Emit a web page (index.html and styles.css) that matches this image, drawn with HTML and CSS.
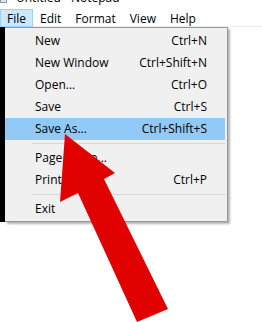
FILE: index.html
```html
<!DOCTYPE html>
<html lang="en">
<head>
    <meta charset="UTF-8">
    <title>Untitled - Notepad</title>
    <link rel="stylesheet" href="styles.css">
</head>
<body>
    <div class="window">
        <header class="titlebar">
            <span class="app-icon"></span>
            <span class="title">Untitled - Notepad</span>
        </header>

        <nav class="menubar">
            <span class="menubar-item active">File</span>
            <span class="menubar-item">Edit</span>
            <span class="menubar-item">Format</span>
            <span class="menubar-item">View</span>
            <span class="menubar-item">Help</span>
        </nav>

        <div class="editor"></div>

        <!-- File menu, open -->
        <div class="dropdown">
            <div class="edge"></div>
            <ul class="menu">
                <li class="menu-row"><span>New</span><span class="key">Ctrl+N</span></li>
                <li class="menu-row"><span>New Window</span><span class="key">Ctrl+Shift+N</span></li>
                <li class="menu-row"><span>Open...</span><span class="key">Ctrl+O</span></li>
                <li class="menu-row"><span>Save</span><span class="key">Ctrl+S</span></li>
                <li class="menu-row selected"><span>Save As...</span><span class="key">Ctrl+Shift+S</span></li>
                <li class="separator"></li>
                <li class="menu-row"><span>Page Setup...</span></li>
                <li class="menu-row"><span>Print...</span><span class="key">Ctrl+P</span></li>
                <li class="separator"></li>
                <li class="menu-row"><span>Exit</span></li>
            </ul>
        </div>

        <!-- annotation arrow -->
        <svg class="arrow" width="262" height="322" viewBox="0 0 262 322">
            <polygon points="65,134 115,173 104,179 168,309 137,322 78,193 60,202" fill="#e00000"/>
        </svg>
    </div>
</body>
</html>
```

FILE: styles.css
```css
* {
    margin: 0;
    padding: 0;
    box-sizing: border-box;
}

body {
    font-family: 'Open Sans', 'Liberation Sans', sans-serif;
    font-size: 12px;
    color: #000;
    background: white;
    overflow: hidden;
}

.window {
    position: relative;
    width: 262px;
    height: 322px;
    display: flex;
    flex-direction: column;
    background: white;
    overflow: hidden;
}

.titlebar {
    height: 9px;
    display: flex;
    align-items: flex-start;
    overflow: hidden;
}

.app-icon {
    width: 7px;
    height: 4px;
    margin-top: -1px;
    border: 1px solid #8a9aa8;
    border-top: none;
    background: #dfe8f0;
}

.title {
    margin-left: 9px;
    margin-top: -8px;
    line-height: 12px;
}

.menubar {
    display: flex;
    height: 18px;
    border-bottom: 1px solid #ededed;
}

.menubar-item {
    padding: 0 6px;
    line-height: 17px;
    border: 1px solid transparent;
    border-bottom: none;
}

.menubar-item.active {
    background: #cce8ff;
    border-color: #99d1ff;
    border-bottom: 1px solid #99d1ff;
    height: 18px;
}

.editor {
    flex: 1;
    background: white;
}

.dropdown {
    position: absolute;
    top: 27px;
    left: 0;
    display: flex;
}

.edge {
    width: 5px;
    background: #000;
}

.menu {
    list-style: none;
    width: 223px;
    height: 195px;
    padding: 2px 2px 2px 0;
    background: #f0f0f0;
    border: 1px solid #979797;
    border-left: none;
    box-shadow: 2px 2px 2px rgba(0, 0, 0, 0.3);
}

.menu-row {
    display: flex;
    justify-content: space-between;
    height: 22px;
    line-height: 22px;
    padding: 0 18px 0 30px;
}

.menu-row.selected {
    background: #91c9f7;
}

.separator {
    height: 7px;
    padding-top: 3px;
    margin-left: 27px;
}

.separator::after {
    content: '';
    display: block;
    height: 1px;
    background: #d7d7d7;
}

.arrow {
    position: absolute;
    top: 0;
    left: 0;
}
```
